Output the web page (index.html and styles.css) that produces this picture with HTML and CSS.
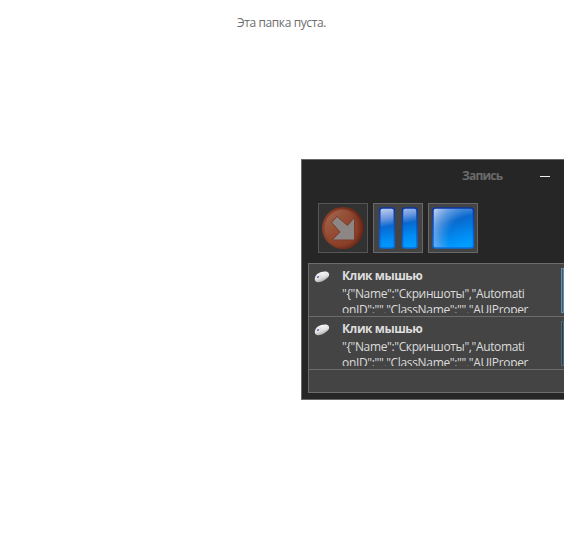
FILE: index.html
```
<!DOCTYPE html>
<html lang="ru">
<head>
<meta charset="utf-8">
<title>Запись</title>
<link rel="stylesheet" href="styles.css">
</head>
<body>
<p class="empty"><span>Эта папка пуста.</span></p>
<section class="window">
  <header class="titlebar"><h1>Запись</h1><button class="minimize" aria-label="Свернуть"></button></header>
  <div class="toolbar">
    <button class="tool disabled" aria-label="Запись">
      <svg width="48" height="48" viewBox="0 0 48 48">
        <defs><radialGradient id="red" cx=".42" cy=".5" r=".58"><stop offset="0" stop-color="#96482f"/><stop offset=".7" stop-color="#8a4029"/><stop offset=".9" stop-color="#732b1b"/><stop offset="1" stop-color="#51251c"/></radialGradient>
        <linearGradient id="shine" x1="0" y1="0" x2=".7" y2=".7"><stop offset="0" stop-color="#b58a72" stop-opacity=".65"/><stop offset="1" stop-color="#9b5036" stop-opacity="0"/></linearGradient></defs>
        <circle cx="24" cy="24" r="21" fill="url(#red)"/>
        <circle cx="24" cy="24" r="18.5" fill="url(#shine)"/>
        <path d="M18 13 28.500 22 35 14.500V35.500H14L21.500 28 13 18.500Z" fill="#8c8784" stroke="#7a3a28" stroke-width="1.500" stroke-linejoin="round" paint-order="stroke"/>
      </svg>
    </button>
    <button class="tool" aria-label="Пауза">
      <svg width="48" height="48" viewBox="0 0 48 48">
        <defs><linearGradient id="bar" gradientUnits="userSpaceOnUse" x1="20" y1="4" x2="27" y2="44"><stop offset="0" stop-color="#b3c5ec"/><stop offset=".22" stop-color="#6c98df"/><stop offset=".42" stop-color="#0869cf"/><stop offset=".75" stop-color="#008df5"/><stop offset="1" stop-color="#009cff"/></linearGradient>
        <linearGradient id="edge" x1="0" y1="0" x2="0" y2="1"><stop offset="0" stop-color="#0b35a5"/><stop offset="1" stop-color="#0870e0"/></linearGradient></defs>
        <g fill="url(#bar)" stroke="url(#edge)" stroke-width="1.500"><rect x="5.800" y="4" width="14.500" height="40" rx="2.500"/><rect x="28.500" y="4" width="14.500" height="40" rx="2.500"/></g>
      </svg>
    </button>
    <button class="tool" aria-label="Стоп">
      <svg width="48" height="48" viewBox="0 0 48 48">
        <defs><linearGradient id="square" x1=".3" y1="0" x2=".6" y2="1"><stop offset="0" stop-color="#2f78d2"/><stop offset=".35" stop-color="#0869cd"/><stop offset=".78" stop-color="#008ef5"/><stop offset="1" stop-color="#009dff"/></linearGradient>
        <radialGradient id="glow" cx=".95" cy=".75" r="1.150"><stop offset=".48" stop-color="#65a9ed" stop-opacity="0"/><stop offset=".8" stop-color="#8ab5ea" stop-opacity=".7"/><stop offset="1" stop-color="#c4d2f0" stop-opacity=".95"/></radialGradient></defs>
        <rect x="4" y="4" width="40.500" height="40" rx="2.500" fill="url(#square)"/>
        <rect x="4" y="4" width="40.500" height="40" rx="2.500" fill="url(#glow)" stroke="url(#edge)" stroke-width="1.500"/>
      </svg>
    </button>
  </div>
  <div class="list">
    <article class="item">
      <svg class="mouse" width="16" height="12" viewBox="0 0 16 12"><defs><linearGradient id="mouse" x1="0" y1="0" x2=".5" y2="1"><stop stop-color="#fff"/><stop offset=".6" stop-color="#e5e5e6"/><stop offset="1" stop-color="#aaa"/></linearGradient></defs><path d="M.8 8C1 3.500 6 .5 11 .6c3 0 5 2 3.800 4.600C12 9 6 12 3 11 1.500 10.600.8 9.500.8 8Z" fill="url(#mouse)"/><path d="m5.500 3 2.500 4" stroke="#ccc" stroke-width=".6"/><ellipse cx="4" cy="6" rx="1.300" ry=".8" transform="rotate(-30 4 6)" fill="#6663a1"/></svg>
      <div class="copy"><h2>Клик мышью</h2><p><span class="line one">"{"Name":"Скриншоты","Automati</span><span class="line two">onID":"","ClassName":"","AUIProper</span></p></div>
      <div class="preview"></div>
    </article>
    <article class="item">
      <svg class="mouse" width="16" height="12" viewBox="0 0 16 12"><path d="M.8 8C1 3.500 6 .5 11 .6c3 0 5 2 3.800 4.600C12 9 6 12 3 11 1.500 10.600.8 9.500.8 8Z" fill="url(#mouse)"/><path d="m5.500 3 2.500 4" stroke="#ccc" stroke-width=".6"/><ellipse cx="4" cy="6" rx="1.300" ry=".8" transform="rotate(-30 4 6)" fill="#6663a1"/></svg>
      <div class="copy"><h2>Клик мышью</h2><p><span class="line one">"{"Name":"Скриншоты","Automati</span><span class="line two">onID":"","ClassName":"","AUIProper</span></p></div>
      <div class="preview muted"></div>
    </article>
  </div>
</section>
</body>
</html>
```
FILE: styles.css
```
* { box-sizing: border-box; }
body { margin: 0; height: 543px; overflow: hidden; background: #fff; font: 12px/18px "Open Sans", "Noto Sans", sans-serif; }
h1, h2, p { margin: 0; }
button { padding: 0; border: 0; background: none; }
.empty { height: 159px; padding-top: 14px; padding-right: 1px; text-align: center; color: #6d6d6d; letter-spacing: -.4px; white-space: nowrap; }
.window { width: 263px; height: 241px; margin-left: 301px; background: #262626; border: 1px solid #686868; border-right: 0; overflow: hidden; }
.titlebar { height: 43px; display: flex; padding-left: 160px; }
h1 { width: 78px; padding-top: 7px; color: #6b6b6b; font-size: 12px; line-height: 18px; letter-spacing: -.8px; }
.minimize { width: 10px; height: 1px; margin-top: 16px; background: #f0f0f0; }
.toolbar { display: flex; gap: 5px; padding-left: 16px; height: 60px; }
.tool { width: 50px; height: 50px; border: 1px solid #686868; background: #444; }
.tool.disabled { background: #323232; border-color: #565656; }
.tool svg { display: block; }
.list { height: 130px; margin-left: 6px; background: #444; border: 1px solid #6c6c6c; border-right: 0; }
.item { height: 53px; display: flex; border-bottom: 1px solid #6c6c6c; }
.mouse { flex: none; margin: 7px 0 0 5px; }
.copy { width: 219px; flex: none; padding: 3px 0 0 12px; color: #ddd; }
h2 { height: 18px; font-size: 12px; line-height: 18px; letter-spacing: -.45px; }
.copy p { height: 28px; overflow: hidden; }
.line { display: block; white-space: nowrap; line-height: 18px; height: 16px; letter-spacing: -.37px; }
.line.two { letter-spacing: -.34px; }
.preview { width: 12px; height: 45px; margin: 4px 0 0 12px; border: 1px solid #658ba7; background: #395b75; }
.preview.muted { border-color: #506779; background: #2a3a49; }
```
